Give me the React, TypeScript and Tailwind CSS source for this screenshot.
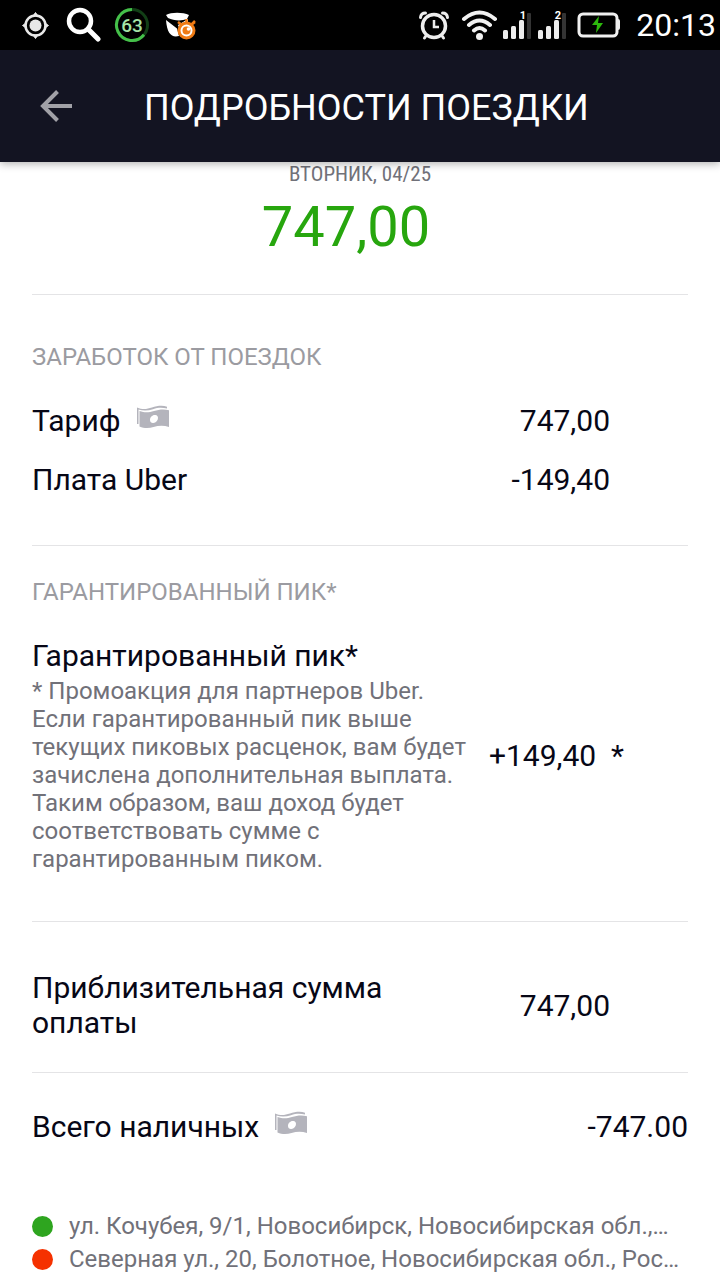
import React from 'react';

const addresses = [
  { id: 'from', color: 'bg-[#2ea51f]', text: 'ул. Кочубея, 9/1, Новосибирск, Новосибирская обл.,…' },
  { id: 'to', color: 'bg-[#f53100]', text: 'Северная ул., 20, Болотное, Новосибирская обл., Рос…' },
];

const CashIcon: React.FC = () => (
  <svg width="34" height="28" viewBox="0 -3 34 28" className="shrink-0" aria-hidden="true">
    <path d="M0 1.500C6 4 10 3 15 1.500C20 -.2 26 -.8 30 .8V2.600C25 1.300 21 1.500 16 3.200C11 4.900 6 5 1.500 3.500V18H0Z" fill="#b4b4bc" />
    <path
      fillRule="evenodd"
      d="M2.500 5C8 7 12 6.500 17 5C22 3.400 27 2.700 32 4.300V21C27 19.200 22 19.200 16.500 21C12 22.500 7 22.500 2.500 20.500ZM18.500 9C15.500 8.500 13 11 13 14C13 16 14.500 17.200 16.300 17C19 16.700 21 14.500 21 12C21 10.300 20 9.200 18.500 9Z"
      fill="#b4b4bc"
    />
  </svg>
);

const SignalIcon: React.FC<{ sim: string }> = ({ sim }) => (
  <svg width="30" height="30" viewBox="0 0 30 30" aria-hidden="true">
    <g fill="#ededed">
      <rect x="1" y="20" width="5" height="9" rx="1.500" />
      <rect x="9" y="16" width="5" height="13" rx="1.500" />
      <rect x="17" y="10" width="5" height="19" rx="1.500" />
    </g>
    <rect x="25" y="3" width="4" height="26" rx="1" fill="#343434" />
    <text x="21" y="9" textAnchor="middle" fontSize="11" fontWeight="700" fill="#ffffff">{sim}</text>
  </svg>
);

const StatusBar: React.FC = () => (
  <div className="flex h-[50px] items-center justify-between bg-black pl-[22px] pr-1 text-white">
    <div className="flex items-center gap-4">
      <svg width="27" height="27" viewBox="0 0 27 27" aria-hidden="true">
        <circle cx="13.500" cy="13.500" r="10" fill="none" stroke="#e8e8e8" strokeWidth="2.500" />
        <path d="M11 4L13.500 .5L16 4ZM11 23L13.500 26.500L16 23ZM4 11L.5 13.500L4 16ZM23 11L26.500 13.500L23 16Z" fill="#e8e8e8" stroke="#e8e8e8" strokeWidth="1" />
        <circle cx="13.500" cy="13.500" r="6" fill="#e8e8e8" />
      </svg>
      <svg width="36" height="36" viewBox="0 0 36 36" fill="none" stroke="#fff" aria-hidden="true">
        <circle cx="15" cy="14" r="11" strokeWidth="4.500" />
        <path d="M23 22L33 32" strokeWidth="5" strokeLinecap="round" />
      </svg>
      <svg width="36" height="36" viewBox="0 0 36 36" className="-ml-[3px]" aria-hidden="true">
        <circle cx="18" cy="18" r="15.500" fill="none" stroke="#123f16" strokeWidth="3" />
        <path d="M18 2.500A15.500 15.500 0 1 0 30 27.800" fill="none" stroke="#45c04a" strokeWidth="3" />
        <text x="18" y="25" textAnchor="middle" fontSize="19" fontWeight="500" fill="#a5e3a7">63</text>
      </svg>
      <svg width="32" height="32" viewBox="0 0 32 32" aria-hidden="true">
        <path d="M0 6C5 3 17 3 23 6L21 10C16 12 8 12 2 9Z" fill="#fff" />
        <path d="M0 11L11 19.500L13 27C6 29 1 25 0 11ZM12 16L22 10V18L14 21Z" fill="#fff" />
        <path d="M12 13L16 16M29 13L25 16M20.500 10V14M26 15L29 12" stroke="#ef7b15" strokeWidth="2.500" />
        <circle cx="20.500" cy="21.500" r="7.500" fill="#fff" stroke="#ef7b15" strokeWidth="3" />
        <circle cx="20.500" cy="21.500" r="4" fill="#ef7b15" />
        <circle cx="22.500" cy="20" r="1.800" fill="#fff" />
      </svg>
    </div>
    <div className="flex items-center">
      <svg width="32" height="32" viewBox="0 0 32 32" fill="none" stroke="#ededed" strokeLinecap="round" aria-hidden="true">
        <circle cx="16" cy="17" r="11.500" strokeWidth="3.500" />
        <path d="M16 11v7h5" strokeWidth="2.500" strokeLinecap="butt" />
        <path d="M2.500 8.500Q3 4 7.500 4M29.500 8.500Q29 4 24.500 4M7.500 27.500l-1 1.500M24.500 27.500l1 1.500" strokeWidth="3" />
      </svg>
      <svg width="37" height="32" viewBox="0 0 37 32" fill="none" stroke="#f2f2f2" strokeWidth="4" strokeLinecap="round" className="ml-[11px]" aria-hidden="true">
        <path d="M3 10Q18.500-3 34 10M8 16Q18.500 7 29 16M13 21.500Q18.500 16.500 24 21.500" />
        <circle cx="18.500" cy="27.500" r="3.500" fill="#f2f2f2" stroke="none" />
      </svg>
      <div className="ml-1 flex gap-[5px]">
        <SignalIcon sim="1" />
        <SignalIcon sim="2" />
      </div>
      <svg width="44" height="28" viewBox="0 0 44 28" className="ml-[10px]" aria-hidden="true">
        <rect x="2" y="3" width="38" height="22" rx="4" fill="none" stroke="#f0f0f0" strokeWidth="3" />
        <path d="M40 8h1q2 0 2 2v7q0 2-2 2h-1Z" fill="#f0f0f0" />
        <path d="M22 5l-7 9h5l-1 8 7-10h-5Z" fill="#2db80d" />
      </svg>
      <span className="ml-[15px] text-[32px] leading-[50px]">20:13</span>
    </div>
  </div>
);

const TripHeader: React.FC = () => (
  <header className="relative flex h-28 items-center bg-[#131422] pl-10 shadow-[0_2px_8px_rgba(0,0,0,0.3)]">
    <button type="button" aria-label="Назад" className="text-[#a1a1a7]">
      <svg width="32" height="32" viewBox="0 0 32 32" fill="none" stroke="currentColor" strokeWidth="4" aria-hidden="true">
        <path d="M32 16H3M17.500 1.500L3 16l14.500 14.500" />
      </svg>
    </button>
    <h1 className="ml-[72px] whitespace-nowrap pt-[3px] text-[36px] leading-10 text-white">ПОДРОБНОСТИ ПОЕЗДКИ</h1>
  </header>
);

const App: React.FC = () => {
  return (
    <div className="w-full overflow-hidden bg-white font-['Roboto',sans-serif] text-[#070716]">
      <StatusBar />
      <TripHeader />

      <main className="px-8 pb-1 text-[30px] leading-[35px]">
        <section className="border-b border-[#e4e4e6] pb-[35px] text-center">
          <p className="font-['Roboto_Condensed','Roboto',sans-serif] text-[21px] leading-6 text-[#717179]">ВТОРНИК, 04/25</p>
          <p className="mt-[9px] pr-7 text-[56px] leading-[64px] text-[#27a60e]">747,00</p>
        </section>

        <section className="border-b border-[#e4e4e6] pb-12 pt-[46px]">
          <h2 className="text-2xl leading-8 text-[#9b9ba1]">ЗАРАБОТОК ОТ ПОЕЗДОК</h2>
          <div className="mt-[30px] flex items-center justify-between pr-[78px]">
            <div className="flex items-start gap-4">
              <span>Тариф</span>
              <CashIcon />
            </div>
            <span>747,00</span>
          </div>
          <div className="mt-6 flex items-center justify-between pr-[78px]">
            <span>Плата Uber</span>
            <span>-149,40</span>
          </div>
        </section>

        <section className="border-b border-[#e4e4e6] pb-12 pt-[30px]">
          <h2 className="text-2xl leading-8 text-[#9b9ba1]">ГАРАНТИРОВАННЫЙ ПИК*</h2>
          <div className="mt-[30px] flex items-center justify-between pr-16">
            <div>
              <p className="pb-1">Гарантированный пик*</p>
              <p className="whitespace-nowrap text-2xl leading-7 text-[#717179]">
                * Промоакция для партнеров Uber.<br />
                Если гарантированный пик выше<br />
                текущих пиковых расценок, вам будет<br />
                зачислена дополнительная выплата.<br />
                Таким образом, ваш доход будет<br />
                соответствовать сумме с<br />
                гарантированным пиком.
              </p>
            </div>
            <span className="whitespace-pre">+149,40  *</span>
          </div>
        </section>

        <section className="flex items-center justify-between border-b border-[#e4e4e6] pb-8 pr-[78px] pt-12">
          <p>
            Приблизительная сумма<br />
            оплаты
          </p>
          <span>747,00</span>
        </section>

        <section className="flex items-center justify-between pt-9">
          <div className="flex items-start gap-4">
            <span>Всего наличных</span>
            <CashIcon />
          </div>
          <span>-747.00</span>
        </section>

        <ul className="mt-[66px] text-2xl leading-[33px] text-[#717179]">
          {addresses.map((address) => (
            <li key={address.id} className="flex items-center gap-4 whitespace-nowrap">
              <span className={`size-[21px] shrink-0 rounded-full ${address.color}`} />
              <span>{address.text}</span>
            </li>
          ))}
        </ul>
      </main>
    </div>
  );
};

export default App;
